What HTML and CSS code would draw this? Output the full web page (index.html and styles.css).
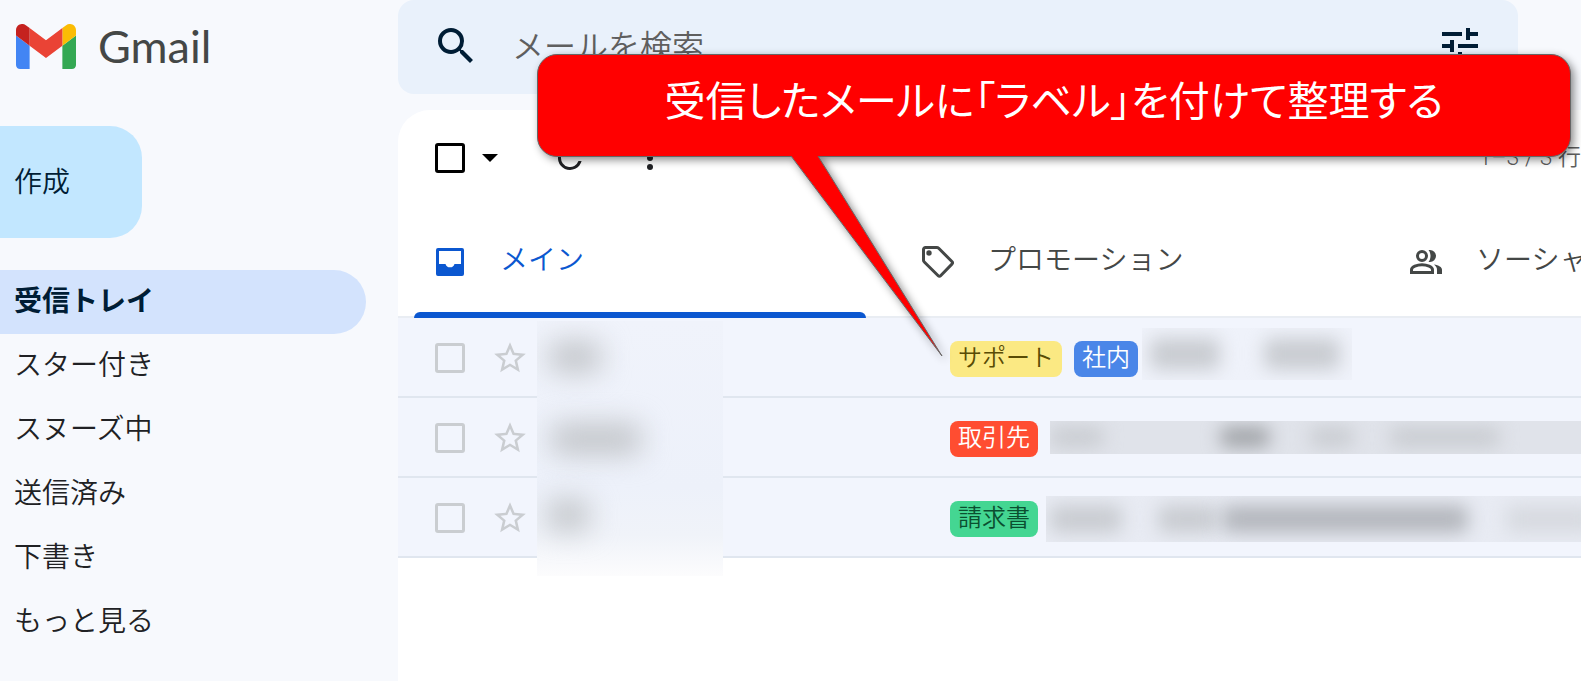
FILE: index.html
```html
<!DOCTYPE html>
<html lang="ja">
<head>
<meta charset="utf-8">
<title>Gmail</title>
<link rel="stylesheet" href="styles.css">
</head>
<body>
<div class="app">
  <aside class="sidebar">
    <a class="brand" href="#">
      <svg class="brand-mark" viewBox="52 42 88 66" aria-hidden="true">
        <path fill="#4285f4" d="M58 108h14V74L52 59v43c0 3.320 2.690 6 6 6"/>
        <path fill="#34a853" d="M120 108h14c3.320 0 6-2.690 6-6V59l-20 15"/>
        <path fill="#fbbc04" d="M120 48v26l20-15v-8c0-7.420-8.470-11.650-14.400-7.200"/>
        <path fill="#ea4335" d="M72 74V48l24 18 24-18v26L96 92"/>
        <path fill="#c5221f" d="M52 51v8l20 15V48l-5.600-4.200c-5.940-4.450-14.400-.220-14.400 7.200"/>
      </svg>
      <span class="brand-name">Gmail</span>
    </a>
    <button class="compose" type="button">作成</button>
    <nav class="folders">
      <a class="folder folder-active" href="#">受信トレイ</a>
      <a class="folder" href="#">スター付き</a>
      <a class="folder" href="#">スヌーズ中</a>
      <a class="folder" href="#">送信済み</a>
      <a class="folder" href="#">下書き</a>
      <a class="folder" href="#">もっと見る</a>
    </nav>
  </aside>

  <main class="content">
    <form class="search">
      <button class="icon-button" type="submit" aria-label="検索">
        <svg class="icon-large" viewBox="0 0 24 24"><path d="M15.500 14h-.790l-.280-.270A6.470 6.470 0 0 0 16 9.500 6.500 6.500 0 1 0 9.500 16c1.610 0 3.090-.590 4.230-1.570l.270.280v.790l5 4.990L20.490 19l-4.990-5zm-6 0C7.010 14 5 11.990 5 9.500S7.010 5 9.500 5 14 7.010 14 9.500 11.990 14 9.500 14z"/></svg>
      </button>
      <input class="search-input" type="text" placeholder="メールを検索" aria-label="メールを検索">
      <button class="icon-button" type="button" aria-label="検索オプション">
        <svg class="icon-large" viewBox="0 0 24 24"><path d="M3 17v2h6v-2H3zM3 5v2h10V5H3zm10 16v-2h8v-2h-8v-2h-2v6h2zM7 9v2H3v2h4v2h2V9H7zm14 4v-2H11v2h10zm-6-4h2V7h4V5h-4V3h-2v6z"/></svg>
      </button>
    </form>

    <section class="panel">
      <div class="toolbar">
        <input class="check check-dark" type="checkbox" aria-label="すべて選択">
        <button class="icon-button select-menu" type="button" aria-label="選択メニュー">
          <svg class="caret" viewBox="0 0 16 8"><path d="M0 0h16L8 8z"/></svg>
        </button>
        <button class="icon-button refresh" type="button" aria-label="更新">
          <svg class="icon-tool" viewBox="0 0 24 24"><path d="M17.650 6.350A8 8 0 1 0 19.730 14h-2.080A6 6 0 1 1 12 6c1.660 0 3.140.690 4.220 1.780L13 11h7V4z"/></svg>
        </button>
        <button class="icon-button more" type="button" aria-label="その他">
          <svg class="icon-tool" viewBox="0 0 36 36"><circle cx="18" cy="9" r="3"/><circle cx="18" cy="18" r="3"/><circle cx="18" cy="27" r="3"/></svg>
        </button>
        <span class="range">1–3 / 3 行</span>
      </div>

      <nav class="tabs">
        <a class="tab tab-active" href="#">
          <svg class="tab-icon" viewBox="0 0 32 32"><path fill-rule="evenodd" d="M4 2h24a2 2 0 0 1 2 2v24a2 2 0 0 1-2 2H4a2 2 0 0 1-2-2V4a2 2 0 0 1 2-2zm1 3v13h6.500a4.700 4.700 0 0 0 9 0H27V5z"/></svg>
          <span>メイン</span>
        </a>
        <a class="tab" href="#">
          <svg class="tab-icon" viewBox="0 0 32 32"><path fill="none" stroke="currentColor" stroke-width="3" stroke-linejoin="round" d="M3.500 1.500h11.200c.800 0 1.500.300 2 .800l13.200 13.200c.800.800.800 1.800 0 2.600L18.600 29.700c-.700.700-1.700.700-2.400 0L2.300 16a2.400 2.400 0 0 1-.800-1.800V3.500a2 2 0 0 1 2-2z"/><circle cx="7" cy="7" r="2.700"/></svg>
          <span>プロモーション</span>
        </a>
        <a class="tab" href="#">
          <svg class="tab-icon" viewBox="0 0 32 32"><path fill="none" stroke="currentColor" stroke-width="3" d="M1.500 26.500v-2.800c0-2.800 5.500-5 10.500-5s10.500 2.200 10.500 5v2.800z"/><circle cx="12" cy="10" r="4.500" fill="none" stroke="currentColor" stroke-width="3"/><path d="M18.500 4h1.500a6 6 0 0 1 0 12h-1.500c2.700-3.400 2.700-8.600 0-12zM24 18.500c4.800.8 8 2.600 8 5.200V28h-5v-4.300c0-2-1-3.700-3-5.200z"/></svg>
          <span>ソーシャル</span>
        </a>
      </nav>

      <div class="mail-list">
        <div class="mail">
          <input class="check" type="checkbox" aria-label="メールを選択">
          <button class="icon-button star" type="button" aria-label="スター"><svg class="icon-star" viewBox="0 0 24 24"><path d="M22 9.240l-7.190-.620L12 2 9.190 8.630 2 9.240l5.460 4.730L5.820 21 12 17.270 18.180 21l-1.630-7.030zM12 15.400l-3.760 2.270 1-4.280-3.320-2.880 4.380-.380L12 6.100l1.710 4.040 4.380.380-3.320 2.880 1 4.280z"/></svg></button>
          <div class="mail-body">
            <span class="label label-yellow">サポート</span>
            <span class="label label-blue">社内</span>
            <span class="redacted redacted-short"><i class="smudge smudge-a"></i><i class="smudge smudge-b"></i></span>
          </div>
        </div>
        <div class="mail">
          <input class="check" type="checkbox" aria-label="メールを選択">
          <button class="icon-button star" type="button" aria-label="スター"><svg class="icon-star" viewBox="0 0 24 24"><path d="M22 9.240l-7.190-.620L12 2 9.190 8.630 2 9.240l5.460 4.730L5.820 21 12 17.270 18.180 21l-1.630-7.030zM12 15.400l-3.760 2.270 1-4.280-3.320-2.880 4.380-.380L12 6.100l1.710 4.040 4.380.380-3.320 2.880 1 4.280z"/></svg></button>
          <div class="mail-body">
            <span class="label label-red">取引先</span>
            <span class="redacted redacted-mid"><i class="smudge smudge-c"></i><i class="smudge smudge-d"></i><i class="smudge smudge-e"></i><i class="smudge smudge-f"></i></span>
          </div>
        </div>
        <div class="mail">
          <input class="check" type="checkbox" aria-label="メールを選択">
          <button class="icon-button star" type="button" aria-label="スター"><svg class="icon-star" viewBox="0 0 24 24"><path d="M22 9.240l-7.190-.620L12 2 9.190 8.630 2 9.240l5.460 4.730L5.820 21 12 17.270 18.180 21l-1.630-7.030zM12 15.400l-3.760 2.270 1-4.280-3.320-2.880 4.380-.380L12 6.100l1.710 4.040 4.380.380-3.320 2.880 1 4.280z"/></svg></button>
          <div class="mail-body">
            <span class="label label-green">請求書</span>
            <span class="redacted redacted-tall"><i class="smudge smudge-g"></i><i class="smudge smudge-h"></i><i class="smudge smudge-i"></i><i class="smudge smudge-j"></i></span>
          </div>
        </div>
        <div class="senders-mask"><i class="smudge sender-a"></i><i class="smudge sender-b"></i><i class="smudge sender-c"></i></div>
      </div>
    </section>
  </main>
</div>

<div class="callout">
  <p class="callout-text">受信したメールに「ラベル」を付けて整理する</p>
  <svg class="callout-pointer" viewBox="0 0 160 206" aria-hidden="true">
    <path fill="#f00" d="M1 0L154 203 28 0z"/>
    <path fill="none" stroke="#666" d="M3 3L154 203 30 3"/>
  </svg>
</div>
</body>
</html>
```
FILE: styles.css
```css
* {
  box-sizing: border-box;
}

body {
  margin: 0;
  min-height: 100vh;
  overflow: hidden;
  background: #f7f9fd;
  color: #202124;
  font-family: Roboto, "Noto Sans CJK JP", sans-serif;
  font-size: 28px;
  font-weight: 350;
}

button,
input {
  font: inherit;
}

a {
  color: inherit;
  text-decoration: none;
}

svg {
  display: block;
  flex: none;
  fill: currentColor;
}

.app {
  display: grid;
  grid-template-columns: 398px minmax(0, 1fr);
  min-height: 100vh;
}

/* Sidebar */
.brand {
  display: flex;
  align-items: center;
  gap: 22px;
  height: 94px;
  padding: 0 0 2px 16px;
  color: #444746;
}

.brand-mark {
  width: 60px;
  height: 45px;
}

.brand-name {
  font-family: Lato, sans-serif;
  font-size: 45px;
  font-weight: 400;
  line-height: 48px;
}

.compose {
  display: block;
  width: 142px;
  height: 112px;
  margin: 32px 0;
  padding: 0 14px 4px;
  border: 0;
  border-radius: 0 32px 32px 0;
  background: #c2e7ff;
  color: #001d35;
  text-align: left;
}

.folder {
  display: block;
  height: 64px;
  margin-right: 32px;
  padding-left: 14px;
  border-radius: 0 32px 32px 0;
  line-height: 64px;
}

.folder-active {
  background: #d3e3fd;
  color: #001d35;
  font-weight: 700;
}

/* Search */
.content {
  display: flex;
  flex-direction: column;
}

.search {
  display: flex;
  align-items: center;
  height: 94px;
  margin-right: 63px;
  padding: 0 34px 2px;
  border-radius: 16px;
  background: #e9f1fb;
}

.icon-button {
  display: flex;
  justify-content: center;
  align-items: center;
  padding: 0;
  border: 0;
  background: none;
  color: #001d35;
}

.icon-large {
  width: 48px;
  height: 48px;
}

.search-input {
  flex: 1;
  min-width: 0;
  padding: 2px 32px 0;
  border: 0;
  outline: 0;
  background: none;
  font-size: 32px;
}

.search-input::placeholder {
  color: #5f5f5f;
  opacity: 1;
}

/* Mail panel */
.panel {
  flex: 1;
  overflow: hidden;
  margin-top: 16px;
  border-radius: 32px 0 0 0;
  background: #fff;
}

.toolbar {
  display: flex;
  align-items: center;
  height: 96px;
  padding-left: 37px;
}

.check {
  flex: none;
  width: 30px;
  height: 30px;
  margin: 0;
  border: 3px solid #cacdd1;
  border-radius: 3px;
  appearance: none;
}

.check-dark {
  border-color: #000;
}

.select-menu {
  width: 50px;
  color: #000;
}

.caret {
  width: 16px;
  height: 8px;
}

.icon-tool {
  width: 36px;
  height: 36px;
}

.refresh {
  width: 80px;
  margin-left: 15px;
  color: #202124;
}

.more {
  width: 80px;
  color: #202124;
}

.range {
  margin-left: auto;
  color: #5e5e5e;
  font-size: 23px;
  line-height: 32px;
}

.tabs {
  display: flex;
  height: 112px;
  border-bottom: 2px solid #e9edf3;
  color: #444746;
}

.tab {
  display: flex;
  flex: 0 0 488px;
  align-items: center;
  gap: 34px;
  position: relative;
  padding: 2px 0 0 36px;
  line-height: 40px;
}

.tab span {
  padding-bottom: 2px;
}

.tab-icon {
  width: 32px;
  height: 32px;
}

.tab-active {
  color: #0b57d0;
}

.tab-active::after {
  content: "";
  position: absolute;
  right: 20px;
  bottom: -2px;
  left: 16px;
  height: 6px;
  border-radius: 6px 6px 0 0;
  background: #0b57d0;
}

.mail-list {
  position: relative;
}

.mail {
  display: flex;
  align-items: center;
  height: 80px;
  padding: 2px 0 0 37px;
  border-bottom: 2px solid #e0e6ef;
  background: #f2f5fd;
}

.star {
  width: 38px;
  margin-left: 26px;
  color: #cacdd1;
}

.icon-star {
  width: 38px;
  height: 38px;
}

.mail-body {
  display: flex;
  flex: 1;
  align-items: center;
  min-width: 0;
  margin-left: 421px;
  padding-top: 2px;
}

.label {
  flex: none;
  height: 36px;
  margin-right: 12px;
  padding: 0 8px;
  border-radius: 8px;
  font-size: 24px;
  line-height: 34px;
}

.label-yellow {
  background: #fbe983;
  color: #594c05;
}

.label-blue {
  background: #4a86e8;
  color: #fff;
}

.label-red {
  background: #ff4d31;
  color: #fff;
}

.label-green {
  background: #44d692;
  color: #0b4f30;
}

/* Hidden mail contents */
.redacted,
.senders-mask {
  position: relative;
  overflow: hidden;
}

.redacted {
  flex: 1;
  background: #e8ebf3;
}

.redacted-short {
  flex: 0 0 210px;
  height: 52px;
  margin: 0 0 10px -8px;
  background: #eff2fa;
}

.redacted-mid {
  height: 33px;
  margin-bottom: 4px;
  background: #e0e3ea;
}

.redacted-tall {
  height: 46px;
  margin-left: -4px;
}

.smudge {
  position: absolute;
  top: 20%;
  height: 60%;
  border-radius: 8px;
  background: #c9ccd1;
  filter: blur(9px);
}

.smudge-a { left: 8px; width: 70px; }
.smudge-b { left: 122px; width: 76px; }
.smudge-c { left: 0; width: 54px; }
.smudge-d { left: 170px; width: 50px; background: #9fa2a6; }
.smudge-e { left: 260px; width: 44px; }
.smudge-f { left: 340px; width: 110px; }
.smudge-g { left: 4px; width: 72px; }
.smudge-h { left: 112px; width: 60px; }
.smudge-i { left: 176px; width: 246px; background: #b4b7bd; }
.smudge-j { left: 460px; width: 90px; background: #d7dae0; }

.senders-mask {
  position: absolute;
  top: 3px;
  left: 139px;
  width: 186px;
  height: 255px;
  background: linear-gradient(#f0f3fb 0, #edf1fa 65%, #f0f3f9 84%, #fcfcfd 100%);
}

.senders-mask .smudge {
  height: 32px;
  background: #c3c6ca;
  filter: blur(14px);
}

.senders-mask .sender-a { top: 20px; left: 12px; width: 52px; }
.senders-mask .sender-b { top: 102px; left: 14px; width: 90px; }
.senders-mask .sender-c { top: 178px; left: 10px; width: 42px; }

/* Annotation laid over the mailbox */
.callout {
  position: absolute;
  top: 54px;
  right: 10px;
  left: 537px;
  border: 1px solid #666;
  border-radius: 20px;
  background: #f00;
  filter: drop-shadow(3px 3px 4px rgba(0, 0, 0, 0.45));
}

.callout-text {
  margin: 0;
  padding: 20px 12px 26px;
  color: #fff;
  font-size: 41px;
  font-weight: 400;
  font-feature-settings: "palt";
  line-height: 55px;
  text-align: center;
}

.callout-pointer {
  position: absolute;
  top: 98px;
  left: 250px;
  width: 160px;
  height: 206px;
}
```
